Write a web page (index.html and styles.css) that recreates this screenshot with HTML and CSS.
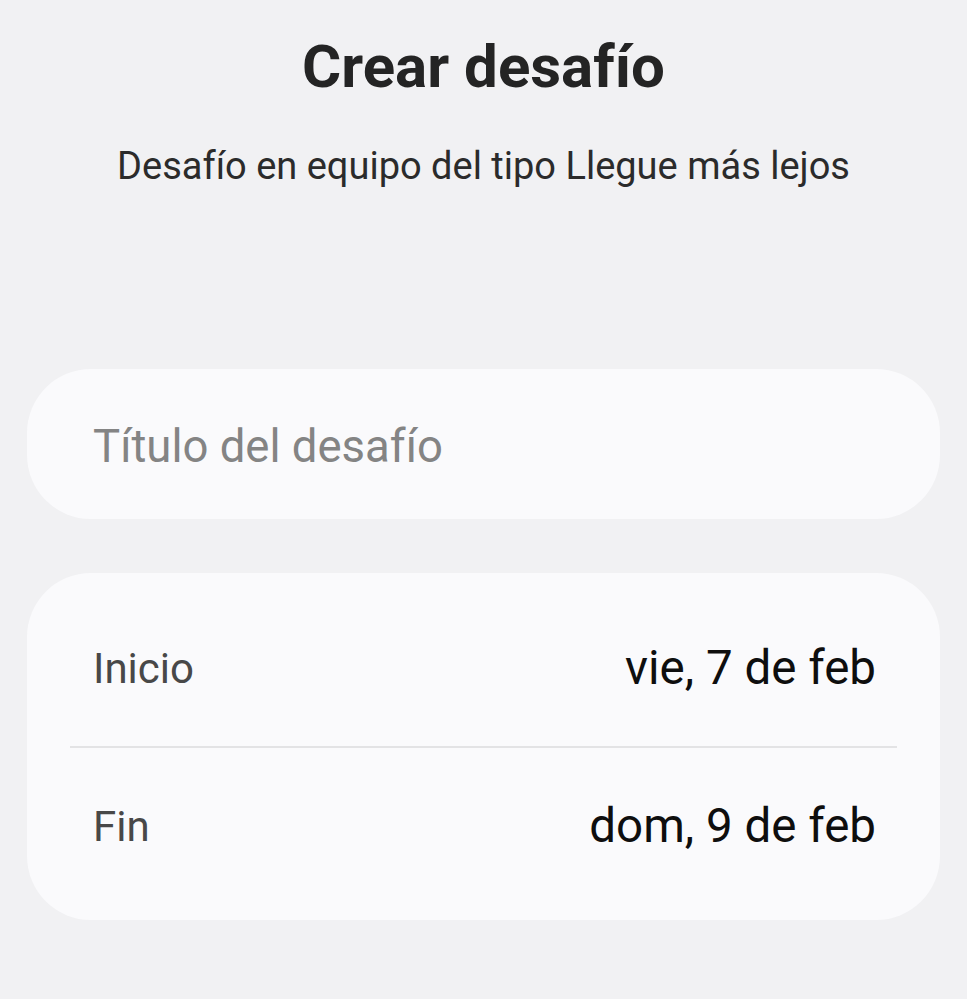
FILE: index.html
```html
<!DOCTYPE html>
<html>
<head>
    <title>Crear desafío</title>
    <link rel="stylesheet" href="styles.css">
</head>
<body>
    <div class="header">
        <h1 class="title">Crear desafío</h1>
        <p class="subtitle">Desafío en equipo del tipo Llegue más lejos</p>
    </div>

    <div class="card field">
        <span class="placeholder">Título del desafío</span>
    </div>

    <div class="card dates">
        <div class="row">
            <span class="label">Inicio</span>
            <span class="value">vie, 7 de feb</span>
        </div>
        <div class="divider"></div>
        <div class="row">
            <span class="label">Fin</span>
            <span class="value">dom, 9 de feb</span>
        </div>
    </div>
</body>
</html>
```

FILE: styles.css
```css
body {
    margin: 0;
    padding: 0 27px;
    background-color: #f1f1f3;
    font-family: Roboto, "Noto Sans", sans-serif;
}

.header {
    text-align: center;
    padding-top: 32px;
    height: 337px;
}

.title {
    margin: 0;
    font-size: 60px;
    line-height: 70px;
    font-weight: 700;
    color: #242424;
}

.subtitle {
    margin: 40px 0 0;
    font-size: 38px;
    line-height: 48px;
    color: #2b2b2b;
}

.card {
    background-color: #fafafc;
    border-radius: 64px;
}

.field {
    height: 150px;
    display: flex;
    align-items: center;
    box-sizing: border-box;
    padding: 4px 66px 0;
}

.placeholder {
    font-size: 45.5px;
    color: #848484;
}

.dates {
    margin-top: 54px;
    padding: 17px 43px 16px;
}

.row {
    display: flex;
    justify-content: space-between;
    align-items: center;
    height: 156px;
    padding: 0 21px 0 23px;
}

.label {
    font-size: 42px;
    color: #484848;
}

.value {
    font-size: 47.5px;
    color: #0e0e0e;
}

.divider {
    height: 2px;
    background-color: #e3e3e5;
}
```
